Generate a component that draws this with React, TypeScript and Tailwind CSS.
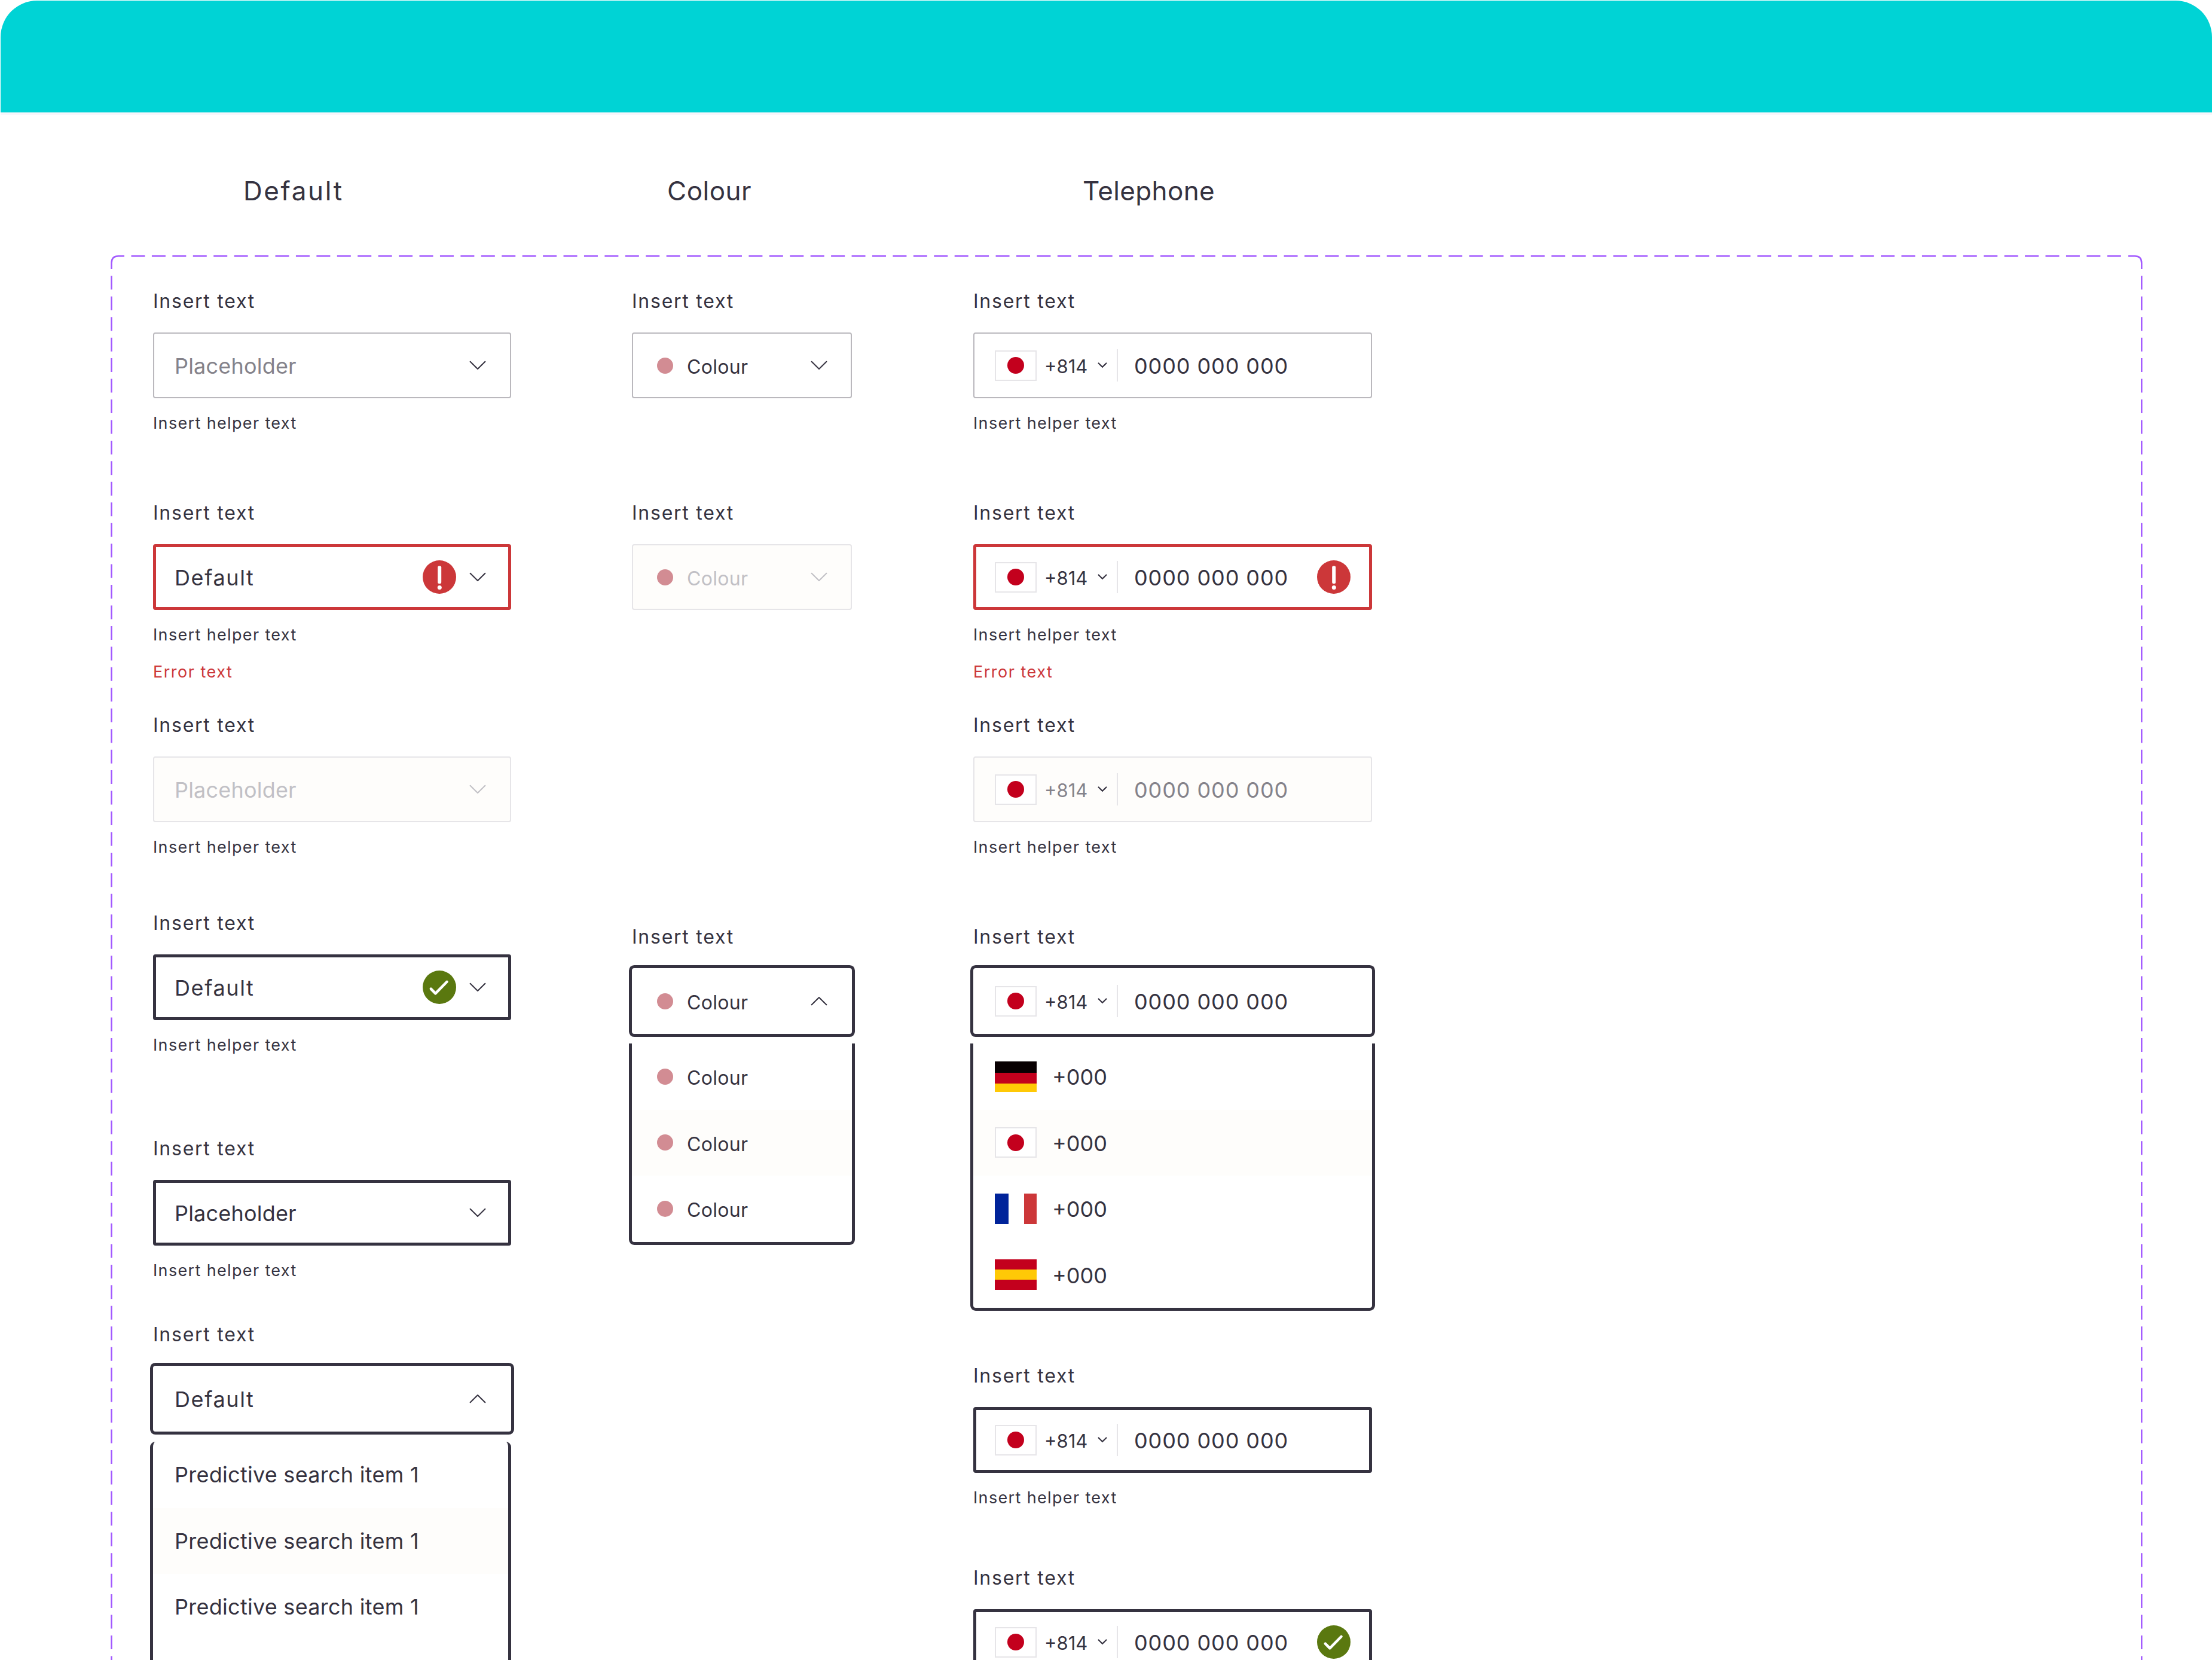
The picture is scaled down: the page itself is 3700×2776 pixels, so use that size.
import type { ReactNode } from "react";

type Status = "default" | "error" | "disabled" | "filled" | "open";

const BOX: Record<Status, string> = {
  default: "ring-2 ring-inset ring-[#bab8bd] bg-white",
  error: "ring-[5px] ring-inset ring-[#cc3739] bg-white",
  disabled: "ring-2 ring-inset ring-[#e6e5e8] bg-[#fefdfb]",
  filled: "ring-[5px] ring-inset ring-[#353240] bg-white",
  open: "ring-[5px] ring-[#353240] bg-white",
};

function Chevron({ up = false, muted = false }: { up?: boolean; muted?: boolean }) {
  return (
    <svg
      className={`h-4 w-7 shrink-0 ${up ? "rotate-180" : ""} ${muted ? "text-[#c1c0c5]" : "text-[#353240]"}`}
      viewBox="0 0 28 16"
      fill="none"
      stroke="currentColor"
      strokeWidth="2"
      strokeLinecap="round"
      strokeLinejoin="round"
    >
      <path d="M1.6 1.8 L14 14 L26.4 1.8" />
    </svg>
  );
}

function SmallChevron() {
  return (
    <svg className="h-[10px] w-4 shrink-0" viewBox="0 0 16 10" fill="none" stroke="#353240" strokeWidth="2.1">
      <path d="M1.6 1.4 L8 7.8 L14.4 1.4" strokeLinecap="round" />
    </svg>
  );
}

function ErrorIcon() {
  return (
    <svg className="size-14 shrink-0" viewBox="0 0 56 56">
      <circle cx="28" cy="28" r="28" fill="#cc3739" />
      <rect x="25.2" y="9.5" width="6" height="29.5" rx="2" fill="#fff" />
      <circle cx="28.3" cy="45.6" r="3.5" fill="#fff" />
    </svg>
  );
}

function SuccessIcon() {
  return (
    <svg className="size-14 shrink-0" viewBox="0 0 56 56" fill="none">
      <circle cx="28" cy="28" r="28" fill="#5a780f" />
      <path
        d="M13.8 30.6 L21.4 38.4 L40.6 18.8"
        stroke="#fff"
        strokeWidth="4.4"
        strokeLinecap="round"
        strokeLinejoin="round"
      />
    </svg>
  );
}

function Flag({ country }: { country: "jp" | "de" | "fr" | "es" }) {
  if (country === "de") {
    return (
      <span className="flex h-[51px] w-[70px] shrink-0 flex-col bg-[#ffc906]">
        <span className="h-[19px] bg-[#080002]" />
        <span className="h-[18px] bg-[#c3001d]" />
      </span>
    );
  }
  if (country === "fr") {
    return (
      <span className="flex h-[51px] w-[70px] shrink-0 justify-between bg-white">
        <span className="w-[23px] bg-[#00239a]" />
        <span className="w-[21px] bg-[#cc3739]" />
      </span>
    );
  }
  if (country === "es") {
    return (
      <span className="flex h-[51px] w-[70px] shrink-0 flex-col justify-between bg-[#ffc906]">
        <span className="h-[17px] bg-[#c3001d]" />
        <span className="h-[17px] bg-[#c3001d]" />
      </span>
    );
  }
  return (
    <span className="flex h-[51px] w-[70px] shrink-0 items-center justify-center border-2 border-[#e6e5e8] bg-white">
      <span className="size-7 rounded-full bg-[#c3001d]" />
    </span>
  );
}

function Field({
  className = "",
  status,
  helper = false,
  error = false,
  children,
  menu,
}: {
  className?: string;
  status: Status;
  helper?: boolean;
  error?: boolean;
  children: ReactNode;
  menu?: ReactNode;
}) {
  return (
    <div className={`flex flex-col ${className}`}>
      <label className="mb-8 h-[42px] pt-[2px] text-[32px] leading-[40px] tracking-[1.75px]">Insert text</label>
      <div className={`flex h-[110px] items-center rounded-[4px] ${BOX[status]}`}>{children}</div>
      {helper && <p className="mt-[26px] h-[30px] text-[27px] leading-[32px] tracking-[1.35px]">Insert helper text</p>}
      {error && (
        <p className="mt-8 h-[31px] text-[27px] leading-[32px] tracking-[1.5px] text-[#cc3739]">Error text</p>
      )}
      {menu}
    </div>
  );
}

function SelectContent({
  text,
  className,
  muted,
  up,
  icon,
}: {
  text: string;
  className: string;
  muted?: boolean;
  up?: boolean;
  icon?: ReactNode;
}) {
  return (
    <div className="flex flex-1 items-center pr-[42px] pl-9">
      <span className={`flex-1 pt-[2px] text-[36px] ${className}`}>{text}</span>
      {icon && <span className="mr-[22px]">{icon}</span>}
      <Chevron up={up} muted={muted} />
    </div>
  );
}

function Swatch({ muted = false }: { muted?: boolean }) {
  return (
    <>
      <span className="ml-[42px] size-[27px] shrink-0 rounded-full bg-[#d28c93]" />
      <span className={`ml-[23px] flex-1 pt-[6px] text-[32px] tracking-[0.3px] ${muted ? "text-[#c1c0c5]" : ""}`}>
        Colour
      </span>
    </>
  );
}

function ColourContent({ muted, up }: { muted?: boolean; up?: boolean }) {
  return (
    <div className="flex flex-1 items-center pr-[41px]">
      <Swatch muted={muted} />
      <Chevron up={up} muted={muted} />
    </div>
  );
}

function PhoneContent({ muted = false, icon }: { muted?: boolean; icon?: ReactNode }) {
  const tone = muted ? "text-[#84828a]" : "";
  return (
    <div className="flex flex-1 items-center pr-9 pl-9">
      <Flag country="jp" />
      <span className={`ml-[13px] w-[89px] pt-[5px] text-[31px] ${tone}`}>+814</span>
      <SmallChevron />
      <span className="ml-4 h-[54px] w-[2px] bg-[#e6e5e8]" />
      <span className={`ml-[27px] flex-1 pt-px text-[36px] tracking-[0.9px] whitespace-nowrap ${tone}`}>
        0000 000 000
      </span>
      {icon}
    </div>
  );
}

function MenuRow({ active = false, children }: { active?: boolean; children: ReactNode }) {
  return <li className={`flex h-[110.5px] items-center ${active ? "bg-[#fefdfb]" : ""}`}>{children}</li>;
}

/* Dashed outline drawn over the edges of the variant group. */
function FrameOutline() {
  return (
    <svg
      className="pointer-events-none absolute inset-0"
      width="3399"
      height="2349"
      viewBox="185 427 3399 2349"
      fill="none"
      stroke="#a259ff"
      strokeWidth="2.5"
    >
      <path d="M186.5 450 V440 Q186.5 428.3 198 428.3 H208" />
      <path d="M3560 428.3 H3571 Q3582.3 428.3 3582.3 440 V450" />
      <path d="M219.5 428.3 H3559" strokeDasharray="23 11.43" />
      <path d="M186.5 461.3 V2776" strokeDasharray="23 11.45" />
      <path d="M3582.3 461.3 V2776" strokeDasharray="23 11.45" />
    </svg>
  );
}

export default function App() {
  return (
    <div className="flex h-[2776px] w-[3700px] flex-col overflow-hidden bg-white pt-px pl-px font-['Inter','Lato',sans-serif] text-[#353240]">
      <header className="h-[191px] shrink-0 overflow-hidden rounded-t-[61px] border-b-4 border-[#f8f6fb] bg-[#00d3d5]" />

      <div className="mt-[99px] flex h-14 shrink-0 text-[44px] leading-[56px]">
        <h2 className="ml-[406px] w-[709px] tracking-[2.6px]">Default</h2>
        <h2 className="w-[695px] tracking-[0.5px]">Colour</h2>
        <h2 className="tracking-[0.35px]">Telephone</h2>
      </div>

      <section className="relative mt-[80px] ml-[184px] flex h-[2349px] w-[3399px] shrink-0 items-start pt-[55px] pl-[71px]">
        <FrameOutline />

        <div className="mr-[202px] w-[599px]">
          <Field status="default" helper>
            <SelectContent text="Placeholder" className="tracking-[0.2px] text-[#84828a]" />
          </Field>
          <Field className="mt-[114px]" status="error" helper error>
            <SelectContent text="Default" className="tracking-[1.6px]" icon={<ErrorIcon />} />
          </Field>
          <Field className="mt-[52px]" status="disabled" helper>
            <SelectContent text="Placeholder" className="tracking-[0.2px] text-[#c1c0c5]" muted />
          </Field>
          <Field className="mt-[91px]" status="filled" helper>
            <SelectContent text="Default" className="tracking-[1.6px]" icon={<SuccessIcon />} />
          </Field>
          <Field className="mt-[137px]" status="filled" helper>
            <SelectContent text="Placeholder" className="tracking-[0.2px]" />
          </Field>
          <Field
            className="mt-[71px]"
            status="open"
            menu={
              <ul className="mt-[17px] -ml-[5px] rounded-[9px] border-x-[5px] border-b-[5px] border-[#353240] text-[36px] tracking-[0.27px]">
                {[0, 1, 2].map((i) => (
                  <MenuRow key={i} active={i === 1}>
                    <span className="pl-9">Predictive search item 1</span>
                  </MenuRow>
                ))}
                <MenuRow>{null}</MenuRow>
              </ul>
            }
          >
            <SelectContent text="Default" className="tracking-[1.6px]" up />
          </Field>
        </div>

        <div className="mr-[203px] w-[368px]">
          <Field status="default">
            <ColourContent />
          </Field>
          <Field className="mt-[170px]" status="disabled">
            <ColourContent muted />
          </Field>
          <Field
            className="mt-[525px]"
            status="open"
            menu={
              <ul className="-mx-[5px] mt-4 rounded-b-[9px] border-x-[5px] border-b-[5px] border-[#353240]">
                {[0, 1, 2].map((i) => (
                  <MenuRow key={i} active={i === 1}>
                    <Swatch />
                  </MenuRow>
                ))}
              </ul>
            }
          >
            <ColourContent up />
          </Field>
        </div>

        <div className="w-[667px]">
          <Field status="default" helper>
            <PhoneContent />
          </Field>
          <Field className="mt-[114px]" status="error" helper error>
            <PhoneContent icon={<ErrorIcon />} />
          </Field>
          <Field className="mt-[52px]" status="disabled" helper>
            <PhoneContent muted />
          </Field>
          <Field
            className="mt-[114px]"
            status="open"
            menu={
              <ul className="-mx-[5px] mt-4 rounded-b-[9px] border-x-[5px] border-b-[5px] border-[#353240]">
                {(["de", "jp", "fr", "es"] as const).map((country) => (
                  <MenuRow key={country} active={country === "jp"}>
                    <span className="flex items-center pl-9">
                      <Flag country={country} />
                      <span className="ml-[26px] pt-[2px] text-[36px]">+000</span>
                    </span>
                  </MenuRow>
                ))}
              </ul>
            }
          >
            <PhoneContent />
          </Field>
          <Field className="mt-[87px]" status="filled" helper>
            <PhoneContent />
          </Field>
          <Field className="mt-[98px]" status="filled">
            <PhoneContent icon={<SuccessIcon />} />
          </Field>
        </div>
      </section>
    </div>
  );
}
